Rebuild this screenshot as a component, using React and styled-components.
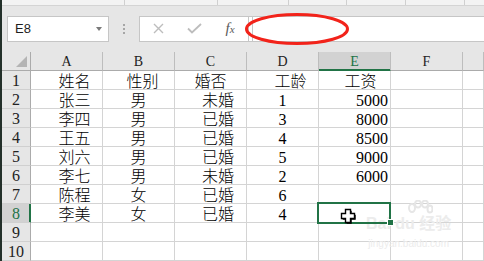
import React from "react";
import styled, { createGlobalStyle, css } from "styled-components";

const Global = createGlobalStyle`
  html, body { margin: 0; padding: 0; background: #e6e6e6; }
  body { width: 484px; height: 261px; overflow: hidden; }
`;

const GREEN = "#217346";
const CELL_FONT = `"Liberation Serif", "Noto Sans CJK SC", serif`;

const Window = styled.div`
  display: flex;
  width: 484px;
  height: 261px;
  overflow: hidden;
  background: #e6e6e6;
`;

const EdgeStrip = styled.div`
  width: 2px;
  flex: none;
  background: #23302a;
`;

const Main = styled.div`
  position: relative;
  flex: 1;
  display: flex;
  flex-direction: column;
  min-width: 0;
`;

const RibbonEdge = styled.div`
  display: flex;
  height: 5px;
  background: #f3f3f3;
  border-bottom: 1px solid #d4d4d4;
`;

const RibbonSeg = styled.div`
  width: ${(p) => p.$w}px;
  flex: none;
  border-right: 1px solid #d0d0d0;
  ${(p) => p.$last && css`flex: 1; border-right: none;`}
`;

const FormulaRow = styled.div`
  display: flex;
  align-items: stretch;
  height: 28px;
  margin: 10px 0 10px 5px;
`;

const NameBox = styled.div`
  width: 102px;
  box-sizing: border-box;
  display: flex;
  align-items: center;
  justify-content: space-between;
  padding: 0 6px 0 7px;
  background: #fff;
  border: 1px solid #c6c6c6;
  font: 13px "Liberation Sans", Arial, sans-serif;
  color: #1e1e1e;
`;

const Caret = styled.span`
  width: 0;
  height: 0;
  border-left: 3.5px solid transparent;
  border-right: 3.5px solid transparent;
  border-top: 4px solid #7a7a7a;
`;

const Grip = styled.div`
  width: 30px;
  display: flex;
  flex-direction: column;
  align-items: center;
  justify-content: center;
  gap: 2px;
`;

const Dot = styled.span`
  width: 2px;
  height: 2px;
  background: #a6a6a6;
`;

const FormulaBar = styled.div`
  flex: 1;
  display: flex;
  background: #fff;
  border: 1px solid #c6c6c6;
  border-right: none;
`;

const FxArea = styled.div`
  width: 108px;
  display: flex;
  border-right: 1px solid #c6c6c6;
`;

const FxButton = styled.div`
  flex: 1;
  display: flex;
  align-items: center;
  justify-content: center;
  color: #5a5a5a;
  font: italic 15px "Liberation Serif", serif;
`;

const FormulaInput = styled.div`
  position: relative;
  flex: 1;
  margin-left: 3px;
  border-left: 1px solid #c6c6c6;
`;

const Annotation = styled.svg`
  position: absolute;
  left: -9px;
  top: -5px;
`;

const Sheet = styled.div`
  display: grid;
  grid-template-columns: 29px repeat(6, 72px) 1fr;
  grid-auto-rows: 19px;
  background: #fff;
`;

const Corner = styled.div`
  position: relative;
  background: #e6e6e6;
  border-right: 1px solid #ababab;
  border-bottom: 1px solid #ababab;
  box-sizing: border-box;
`;

const CornerMark = styled.span`
  position: absolute;
  right: 3px;
  bottom: 3px;
  width: 0;
  height: 0;
  border-left: 11px solid transparent;
  border-bottom: 11px solid #b4b4b4;
`;

const ColHead = styled.div`
  box-sizing: border-box;
  background: ${(p) => (p.$active ? "#d2d2d2" : "#e6e6e6")};
  color: ${(p) => (p.$active ? GREEN : "#222")};
  border-right: 1px solid #bdbdbd;
  border-bottom: 1px solid ${(p) => (p.$active ? GREEN : "#ababab")};
  box-shadow: ${(p) => (p.$active ? `inset 0 -1px ${GREEN}` : "none")};
  text-align: center;
  font: 14px ${CELL_FONT};
  line-height: 18px;
  padding-top: 1px;
`;

const RowHead = styled.div`
  box-sizing: border-box;
  background: ${(p) => (p.$active ? "#d2d2d2" : "#e6e6e6")};
  color: ${(p) => (p.$active ? GREEN : "#222")};
  border-right: 1px solid ${(p) => (p.$active ? GREEN : "#ababab")};
  border-bottom: 1px solid #d0d0d0;
  box-shadow: ${(p) => (p.$active ? `inset -1px 0 ${GREEN}` : "none")};
  text-align: center;
  font: 16px ${CELL_FONT};
  line-height: 18px;
  padding-top: 1px;
`;

const Cell = styled.div`
  position: relative;
  box-sizing: border-box;
  border-right: 1px solid #d4d4d4;
  border-bottom: 1px solid #d4d4d4;
  text-align: ${(p) => p.$align || "center"};
  padding-left: ${(p) => p.$pl || 0}px;
  padding-right: ${(p) => p.$pr || 0}px;
  padding-top: 2px;
  font: 300 16px ${CELL_FONT};
  line-height: 18px;
  color: #000;
  white-space: nowrap;
  ${(p) =>
    p.$selected &&
    css`
      &::after {
        content: "";
        position: absolute;
        top: -2px;
        left: -2px;
        right: -1px;
        bottom: -2px;
        border: 2px solid ${GREEN};
        z-index: 2;
      }
      &::before {
        content: "";
        position: absolute;
        right: -4px;
        bottom: -4px;
        width: 5px;
        height: 5px;
        background: ${GREEN};
        border: 1px solid #fff;
        z-index: 3;
      }
    `}
`;

const Cursor = styled.svg`
  position: absolute;
  left: 21px;
  top: 4px;
  z-index: 4;
`;

const Watermark = styled.div`
  position: absolute;
  left: 364px;
  top: 200px;
  display: flex;
  flex-direction: column;
  align-items: center;
  color: #ececec;
  pointer-events: none;
  z-index: 1;
`;

const Paw = styled.svg`
  margin-left: 22px;
`;

const MarkTitle = styled.span`
  font: bold 16px "Liberation Sans", "Noto Sans CJK SC", sans-serif;
  line-height: 20px;
`;

const MarkUrl = styled.span`
  margin-top: 4px;
  font: 10px "Liberation Sans", sans-serif;
  line-height: 12px;
`;

const columns = ["A", "B", "C", "D", "E", "F", ""];

const data = [
  ["姓名", "性别", "婚否", "工龄", "工资"],
  ["张三", "男", "未婚", "1", "5000"],
  ["李四", "男", "已婚", "3", "8000"],
  ["王五", "男", "已婚", "4", "8500"],
  ["刘六", "男", "已婚", "5", "9000"],
  ["李七", "男", "未婚", "2", "6000"],
  ["陈程", "女", "已婚", "6", ""],
  ["李美", "女", "已婚", "4", ""],
  ["", "", "", "", ""],
  ["", "", "", "", ""],
];

const headerLayout = [
  { $pl: 16 },
  { $pl: 8 },
  {},
  { $pl: 16 },
  { $pl: 12 },
];

const bodyLayout = [
  { $pl: 16 },
  {},
  { $align: "right", $pr: 12 },
  {},
  { $align: "right", $pr: 2 },
];

function PlusCursor() {
  const d = "M5.5 1.5h5v4h4v5h-4v4h-5v-4h-4v-5h4z";
  return (
    <Cursor width="17" height="17" viewBox="0 0 17 17">
      <path d={d} transform="translate(1.2 1.2)" fill="#000" />
      <path d={d} fill="#fff" stroke="#000" strokeWidth="1.4" />
    </Cursor>
  );
}

export default function App() {
  return (
    <>
      <Global />
      <Window>
        <EdgeStrip />
        <Main>
          <RibbonEdge>
            {[122, 92, 70, 57, 58, 58].map((w, i) => (
              <RibbonSeg key={i} $w={w} />
            ))}
            <RibbonSeg $last />
          </RibbonEdge>

          <FormulaRow>
            <NameBox>
              <span>E8</span>
              <Caret />
            </NameBox>
            <Grip>
              <Dot />
              <Dot />
              <Dot />
            </Grip>
            <FormulaBar>
              <FxArea>
                <FxButton>
                  <svg width="11" height="11" viewBox="0 0 11 11">
                    <path d="M1 1l9 9M10 1l-9 9" stroke="#bdbdbd" strokeWidth="1.4" />
                  </svg>
                </FxButton>
                <FxButton>
                  <svg width="15" height="11" viewBox="0 0 15 11">
                    <path d="M1 5.5l4 4L14 1" stroke="#bdbdbd" strokeWidth="1.8" fill="none" />
                  </svg>
                </FxButton>
                <FxButton>
                  f<span style={{ fontSize: 11 }}>x</span>
                </FxButton>
              </FxArea>
              <FormulaInput>
                <Annotation width="106" height="34" viewBox="0 0 106 34">
                  <ellipse cx="53" cy="17" rx="50.5" ry="14.5" fill="none" stroke="#f2231a" strokeWidth="3" />
                </Annotation>
              </FormulaInput>
            </FormulaBar>
          </FormulaRow>

          <Sheet>
            <Corner>
              <CornerMark />
            </Corner>
            {columns.map((c) => (
              <ColHead key={c || "g"} $active={c === "E"}>
                {c}
              </ColHead>
            ))}
            {data.map((row, r) => (
              <React.Fragment key={r}>
                <RowHead $active={r === 7}>{r + 1}</RowHead>
                {row.map((v, c) => {
                  const layout = r === 0 ? headerLayout[c] : bodyLayout[c];
                  const selected = r === 7 && c === 4;
                  return (
                    <Cell key={c} {...layout} $selected={selected}>
                      {v}
                      {selected && <PlusCursor />}
                    </Cell>
                  );
                })}
                <Cell />
                <Cell />
              </React.Fragment>
            ))}
          </Sheet>

          <Watermark>
            <Paw width="26" height="14" viewBox="0 0 26 14">
              <g fill="none" stroke="#e6e6e6" strokeWidth="2">
                <ellipse cx="5" cy="8" rx="3" ry="4" />
                <ellipse cx="11" cy="4" rx="3" ry="3.5" />
                <ellipse cx="18" cy="4" rx="3" ry="3.5" />
                <ellipse cx="23" cy="9" rx="2.5" ry="3.5" />
              </g>
            </Paw>
            <MarkTitle>Bai du 经验</MarkTitle>
            <MarkUrl>jingyan.baidu.com</MarkUrl>
          </Watermark>
        </Main>
      </Window>
    </>
  );
}
